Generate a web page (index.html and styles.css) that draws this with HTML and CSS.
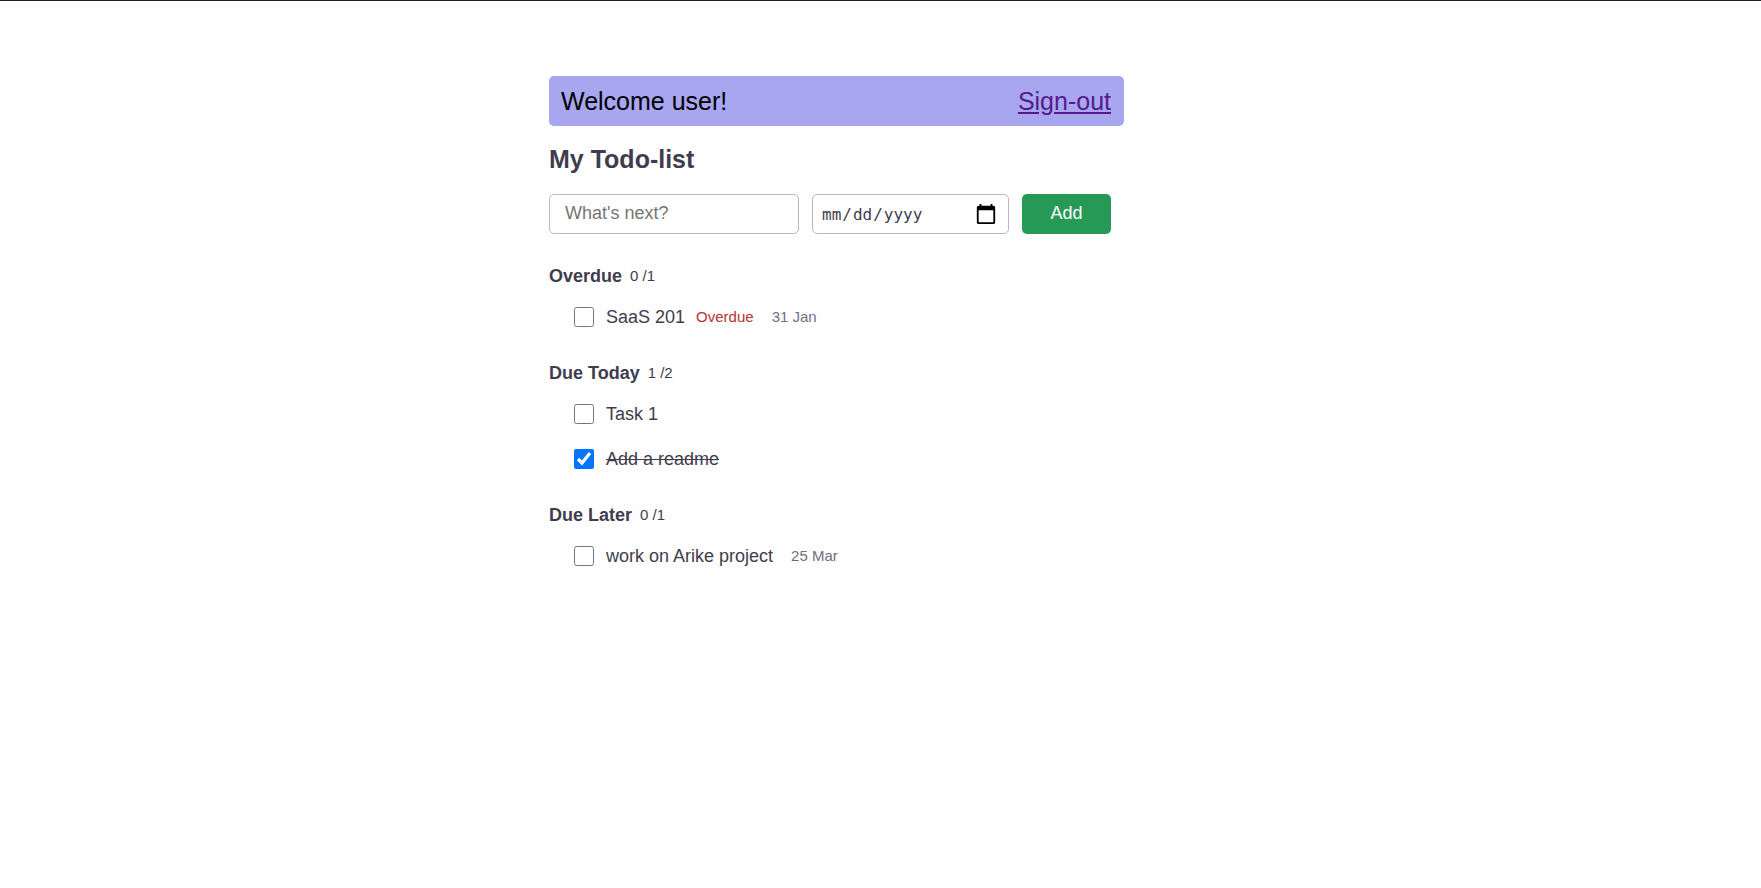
FILE: index.html
```html
<!DOCTYPE html>
<html lang="en">
<head>
<meta charset="utf-8">
<title>My Todo-list</title>
<link rel="stylesheet" href="styles.css">
</head>
<body>
<main class="container">
  <header class="banner">
    <span>Welcome user!</span>
    <a class="signout" href="#">Sign-out</a>
  </header>
  <h1 class="title">My Todo-list</h1>
  <form class="new-todo">
    <input class="field text-field" type="text" placeholder="What's next?" aria-label="Todo text">
    <input class="field date-field" type="date" aria-label="Due date">
    <button class="add" type="button">Add</button>
  </form>

  <section class="group">
    <h2 class="group-title">Overdue <span class="count">0 /1</span></h2>
    <ul class="todos">
      <li class="todo">
        <input class="check" type="checkbox" id="t1">
        <label for="t1">SaaS 201</label>
        <span class="overdue">Overdue</span>
        <span class="date">31 Jan</span>
      </li>
    </ul>
  </section>

  <section class="group">
    <h2 class="group-title">Due Today <span class="count">1 /2</span></h2>
    <ul class="todos">
      <li class="todo">
        <input class="check" type="checkbox" id="t2">
        <label for="t2">Task 1</label>
      </li>
      <li class="todo">
        <input class="check" type="checkbox" id="t3" checked>
        <label class="done" for="t3">Add a readme</label>
      </li>
    </ul>
  </section>

  <section class="group">
    <h2 class="group-title">Due Later <span class="count">0 /1</span></h2>
    <ul class="todos">
      <li class="todo">
        <input class="check" type="checkbox" id="t4">
        <label for="t4">work on Arike project</label>
        <span class="date">25 Mar</span>
      </li>
    </ul>
  </section>
</main>
</body>
</html>
```
FILE: styles.css
```css
* { box-sizing: border-box; }
body {
  margin: 0;
  border-top: 1px solid #232023;
  background: #fefefe;
  color: #3f3d4d;
  font: 18px/24px "Liberation Sans", Arial, sans-serif;
}
.container {
  max-width: 663px;
  margin: 75px auto 0;
}
.banner {
  display: flex;
  justify-content: space-between;
  align-items: center;
  margin-right: 88px;
  padding: 10px 13px 10px 12px;
  border-radius: 5px;
  background: #a7a6ef;
  color: #000;
  font-size: 25px;
  line-height: 30px;
}
.signout { color: #551a8b; }
.title {
  margin: 16px 0 18px;
  font-size: 25px;
  line-height: 34px;
}
.new-todo {
  display: flex;
  gap: 13px;
  margin-bottom: 30px;
}
.field {
  height: 40px;
  border: 1px solid #b9b8c6;
  border-radius: 5px;
  background: #fff;
  color: #3f3d4d;
  font: 18px "Liberation Sans", Arial, sans-serif;
}
.text-field {
  width: 250px;
  padding: 0 15px 2px;
}
.text-field::placeholder { color: #757575; }
.date-field {
  width: 197px;
  padding: 0 11px 0 8px;
  font-family: monospace;
  font-size: 16px;
}
.date-field::-webkit-calendar-picker-indicator {
  width: 22px;
  height: 22px;
  padding: 0;
  background-size: 22px 22px;
}
.add {
  width: 89px;
  height: 40px;
  padding: 0 0 2px;
  border: 0;
  border-radius: 5px;
  background: #279956;
  color: #fff;
  font: 18px "Liberation Sans", Arial, sans-serif;
}
.group { margin-bottom: 31px; }
.group-title {
  display: flex;
  align-items: center;
  gap: 8px;
  margin: 0 0 16px;
  font-size: 18px;
  line-height: 24px;
}
.count {
  font-size: 15px;
  font-weight: 400;
}
.todos {
  display: flex;
  flex-direction: column;
  gap: 19px;
  margin: 0;
  padding: 0 0 0 25px;
  list-style: none;
}
.todo {
  display: flex;
  align-items: center;
  line-height: 26px;
}
.check {
  width: 20px;
  height: 20px;
  margin: 0 12px 0 0;
  accent-color: #0075ff;
}
.done { text-decoration: line-through; }
.overdue {
  margin-left: 11px;
  color: #b23434;
  font-size: 15px;
}
.date {
  margin-left: 18px;
  color: #716f7e;
  font-size: 15px;
}
```
